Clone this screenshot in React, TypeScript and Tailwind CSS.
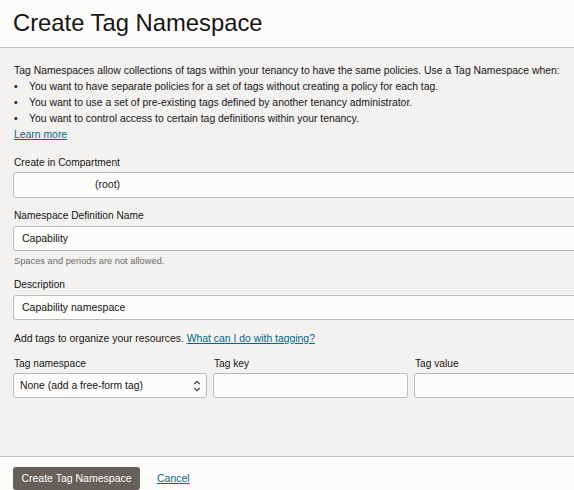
import React from "react";

const font = "font-['Liberation_Sans',Arial,sans-serif]";

function Label({ children, className = "" }: { children: React.ReactNode; className?: string }) {
  return <div className={`text-[10.2px] leading-[14px] text-[#161513] ${className}`}>{children}</div>;
}

function Input({ children, h = "h-[25px]", className = "" }: { children?: React.ReactNode; h?: string; className?: string }) {
  return (
    <div
      className={`${h} w-[600px] rounded-[3px] border border-[#bfbab5] bg-[#fcfcfb] flex items-center pl-[8px] text-[10.5px] text-[#161513] ${className}`}
    >
      {children}
    </div>
  );
}

export default function App() {
  return (
    <div className={`w-[574px] h-[490px] overflow-hidden bg-[#fcfcfb] ${font} text-[#161513]`}>
      <div className="h-[48px] border-b border-[#c4c0bc] pl-[13px] flex items-center pb-[2px]">
        <h1 className="text-[23.8px] leading-none text-[#161513]">Create Tag Namespace</h1>
      </div>

      <div className="h-[408px] bg-[#f3f2f1] px-[13px] pt-[15px] overflow-hidden">
        <div className="text-[10.4px] leading-[16px] pl-[1px]">
          <div>Tag Namespaces allow collections of tags within your tenancy to have the same policies. Use a Tag Namespace when:</div>
          <ul className="list-none">
            <li className="flex">
              <span className="w-[15px]">•</span>
              <span>You want to have separate policies for a set of tags without creating a policy for each tag.</span>
            </li>
            <li className="flex">
              <span className="w-[15px]">•</span>
              <span>You want to use a set of pre-existing tags defined by another tenancy administrator.</span>
            </li>
            <li className="flex">
              <span className="w-[15px]">•</span>
              <span>You want to control access to certain tag definitions within your tenancy.</span>
            </li>
          </ul>
          <div>
            <a className="text-[#00688c] underline">Learn more</a>
          </div>
        </div>

        <Label className="mt-[13px] pl-[1px]">Create in Compartment</Label>
        <Input h="h-[26px]" className="mt-[2px]">
          <span className="ml-[73px]">(root)</span>
        </Input>

        <Label className="mt-[11px] pl-[1px]">Namespace Definition Name</Label>
        <Input className="mt-[3px]">Capability</Input>
        <div className="mt-[4px] text-[9.3px] leading-[12px] text-[#6f6b67] pl-[1px]">Spaces and periods are not allowed.</div>

        <Label className="mt-[11px] pl-[1px]">Description</Label>
        <Input className="mt-[3px]">Capability namespace</Input>

        <div className="mt-[12px] text-[10.4px] leading-[14px] pl-[1px]">
          Add tags to organize your resources.{" "}
          <a className="text-[#00688c] underline">What can I do with tagging?</a>
        </div>

        <div className="mt-[11px] grid grid-cols-[194px_195px_194px] gap-x-[6px] w-[600px]">
          <Label className="pl-[1px]">Tag namespace</Label>
          <Label className="pl-[1px]">Tag key</Label>
          <Label className="pl-[1px]">Tag value</Label>
          <div className="mt-[2px] h-[25px] rounded-[3px] border border-[#bfbab5] bg-[#fcfcfb] flex items-center justify-between pl-[6px] pr-[5px] text-[10.4px]">
            <span>None (add a free-form tag)</span>
            <svg width="8" height="12" viewBox="0 0 8 12" fill="none" stroke="#3b3835" strokeWidth="1.2">
              <path d="M1.2 4.2 L4 1.4 L6.8 4.2" />
              <path d="M1.2 7.8 L4 10.6 L6.8 7.8" />
            </svg>
          </div>
          <div className="mt-[2px] h-[25px] rounded-[3px] border border-[#bfbab5] bg-[#fcfcfb]" />
          <div className="mt-[2px] h-[25px] rounded-[3px] border border-[#bfbab5] bg-[#fcfcfb]" />
        </div>
      </div>

      <div className="border-t border-[#c4c0bc] px-[13px] pt-[10px] flex items-center">
        <button className="h-[23px] w-[127px] rounded-[3px] bg-[#665f5b] text-white text-[10.5px] flex items-center justify-center">
          Create Tag Namespace
        </button>
        <a className="ml-[17px] text-[10.5px] text-[#00688c] underline">Cancel</a>
      </div>
    </div>
  );
}
